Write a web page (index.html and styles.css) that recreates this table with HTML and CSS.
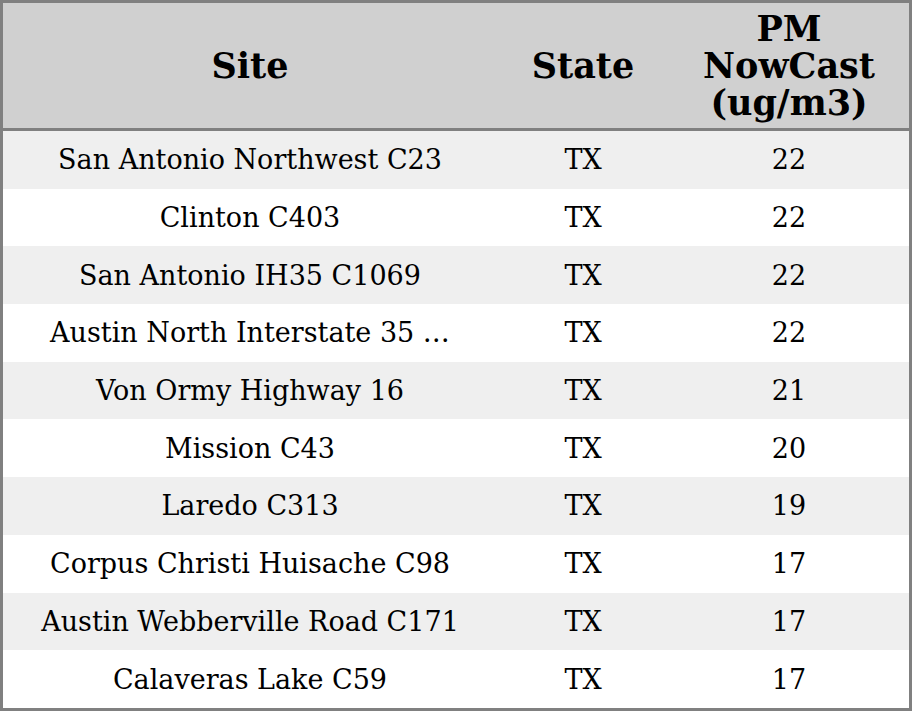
FILE: index.html
```html
<!DOCTYPE html>
<html>
<head>
<meta charset="utf-8">
<link rel="stylesheet" href="styles.css">
</head>
<body>
<table class="grid">
  <colgroup>
    <col class="c-site">
    <col class="c-state">
    <col class="c-pm">
  </colgroup>
  <thead>
    <tr class="head">
      <th>Site</th>
      <th>State</th>
      <th>PM<br>NowCast<br>(ug/m3)</th>
    </tr>
  </thead>
  <tbody>
    <tr class="odd"><td>San Antonio Northwest C23</td><td>TX</td><td>22</td></tr>
    <tr><td>Clinton C403</td><td>TX</td><td>22</td></tr>
    <tr class="odd"><td>San Antonio IH35 C1069</td><td>TX</td><td>22</td></tr>
    <tr><td>Austin North Interstate 35 …</td><td>TX</td><td>22</td></tr>
    <tr class="odd"><td>Von Ormy Highway 16</td><td>TX</td><td>21</td></tr>
    <tr><td>Mission C43</td><td>TX</td><td>20</td></tr>
    <tr class="odd"><td>Laredo C313</td><td>TX</td><td>19</td></tr>
    <tr><td>Corpus Christi Huisache C98</td><td>TX</td><td>17</td></tr>
    <tr class="odd"><td>Austin Webberville Road C171</td><td>TX</td><td>17</td></tr>
    <tr><td>Calaveras Lake C59</td><td>TX</td><td>17</td></tr>
  </tbody>
</table>
</body>
</html>
```
FILE: styles.css
```css
html, body {
  margin: 0;
  padding: 0;
  background: #ffffff;
}
.grid {
  width: 912px;
  height: 711px;
  border-collapse: separate;
  border-spacing: 0;
  border: 3px solid #808080;
  box-sizing: border-box;
  table-layout: fixed;
  font-family: "DejaVu Serif", serif;
  color: #000;
}
.c-site { width: 494px; }
.c-state { width: 172px; }
.c-pm { width: 240px; }
.head th {
  background: #d0d0d0;
  height: 125px;
  padding: 0;
  font-size: 35px;
  font-weight: bold;
  line-height: 37px;
  text-align: center;
  vertical-align: middle;
  border-bottom: 3px solid #808080;
}
tbody td {
  height: 57.7px;
  padding: 0;
  font-size: 27px;
  text-align: center;
  vertical-align: middle;
  white-space: nowrap;
  overflow: hidden;
}
tbody tr.odd td {
  background: #efefef;
}
```
